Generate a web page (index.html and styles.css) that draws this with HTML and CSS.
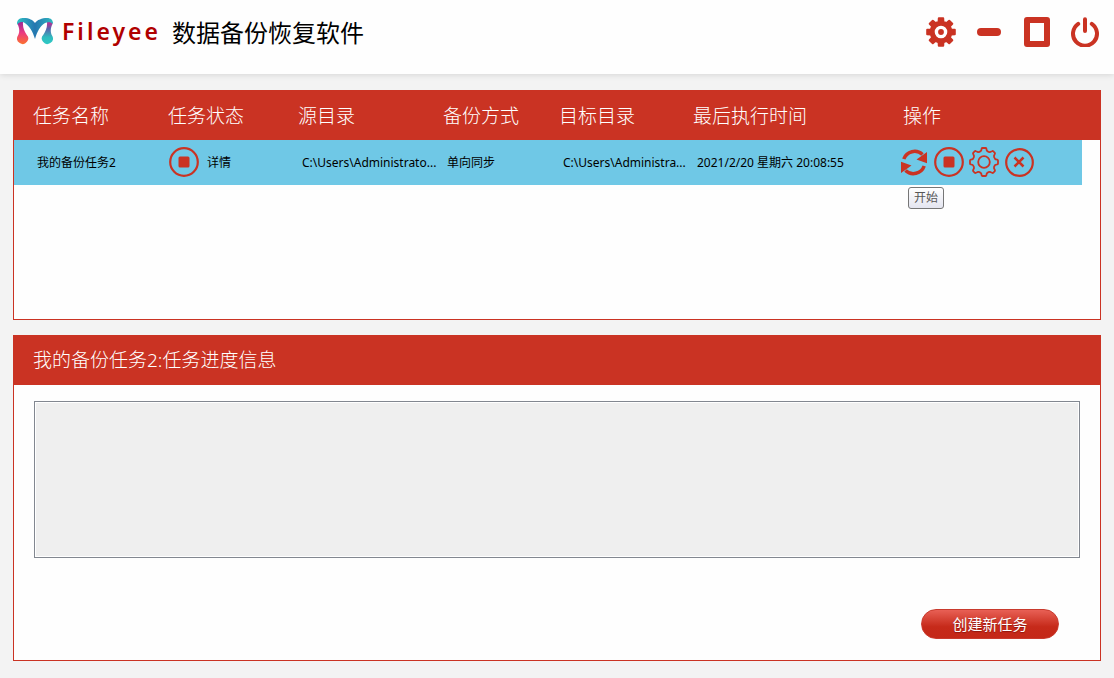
FILE: index.html
```html
<!DOCTYPE html>
<html lang="zh-CN">
<head>
    <meta charset="UTF-8">
    <meta name="viewport" content="width=device-width, initial-scale=1.0">
    <title>Fileyee 数据备份恢复软件</title>
    <link rel="stylesheet" href="styles.css">
</head>
<body>

    <header class="topbar">
        <svg class="logo" viewBox="0 0 36 28" aria-hidden="true">
            <defs>
                <linearGradient id="wing" x1="0" x2="1" y1="0" y2="0">
                    <stop offset="0" stop-color="#2fc0c4"/>
                    <stop offset="0.5" stop-color="#2576b0"/>
                    <stop offset="1" stop-color="#2fb9c0"/>
                </linearGradient>
                <linearGradient id="dropLeft" x1="0" x2="0" y1="0" y2="1">
                    <stop offset="0" stop-color="#9b2a96"/>
                    <stop offset="0.5" stop-color="#ec3a80"/>
                    <stop offset="1" stop-color="#fb7030"/>
                </linearGradient>
                <linearGradient id="dropRight" x1="0" x2="0" y1="0" y2="1">
                    <stop offset="0" stop-color="#c82a90"/>
                    <stop offset="0.3" stop-color="#5a62ac"/>
                    <stop offset="0.7" stop-color="#2ebcbe"/>
                    <stop offset="1" stop-color="#2fc8c4"/>
                </linearGradient>
            </defs>
            <path fill="url(#dropLeft)" d="M0.500 4L6 4C5.500 10 7.500 13 9.500 16.500A5.500 5.500 0 1 1 0.700 18C3 14 2.500 10 0.500 6Z"/>
            <path fill="url(#dropRight)" d="M35.500 4L30 4C30.500 10 28.500 13 26.500 16.500A5.500 5.500 0 1 0 35.300 18C33 14 33.500 10 35.500 6Z"/>
            <path fill="url(#wing)" d="M0 6C0 1 3 0 7 0C12 0 16 2 18 5C20 2 25 0 30 0C34 0 36 2 36 6C34 4 31 4 28 5C23 8 20 14 18 21C16 14 12 7 7 4.500C4 3.500 2 4 0 7Z"/>
        </svg>
        <span class="brand">Fileyee</span>
        <h1>数据备份恢复软件</h1>

        <div class="window-buttons">
            <button class="icon-button" aria-label="设置">
                <svg viewBox="-15 -15 30 30">
                    <path fill="currentColor" stroke="currentColor" stroke-width="2" stroke-linejoin="round" d="M10.200-2.400L13.800-2.200V2.200L10.200 2.400L8.900 5.600L11.300 8.200L8.200 11.300L5.600 8.900L2.400 10.200L2.200 13.800H-2.200L-2.400 10.200L-5.600 8.900L-8.200 11.300L-11.300 8.200L-8.900 5.600L-10.200 2.400L-13.800 2.200V-2.200L-10.200-2.400L-8.900-5.600L-11.300-8.200L-8.200-11.300L-5.600-8.900L-2.400-10.200L-2.200-13.800H2.200L2.400-10.200L5.600-8.900L8.200-11.300L11.300-8.200L8.900-5.600Z"/>
                    <circle r="4.600" fill="currentColor" stroke="#fff" stroke-width="3.400"/>
                </svg>
            </button>
            <button class="icon-button" aria-label="最小化">
                <svg viewBox="0 0 30 30"><rect x="3" y="11" width="24" height="8" rx="4" fill="currentColor"/></svg>
            </button>
            <button class="icon-button" aria-label="最大化">
                <svg viewBox="0 0 30 30"><path fill="currentColor" fill-rule="evenodd" d="M5 0H25Q28 0 28 3V27Q28 30 25 30H5Q2 30 2 27V3Q2 0 5 0ZM8 6V24H22V6Z"/></svg>
            </button>
            <button class="icon-button" aria-label="退出">
                <svg viewBox="0 0 30 30" fill="none" stroke="currentColor" stroke-width="4" stroke-linecap="round"><path d="M8.200 6.800A12 12 0 1 0 21.800 6.800M15 2.200V14"/></svg>
            </button>
        </div>
    </header>

    <main>
        <section class="panel task-list">
            <table>
                <colgroup>
                    <col class="col-name">
                    <col class="col-status">
                    <col class="col-source">
                    <col class="col-mode">
                    <col class="col-target">
                    <col class="col-time">
                    <col>
                    <col class="col-gutter">
                </colgroup>
                <thead>
                    <tr>
                        <th>任务名称</th>
                        <th>任务状态</th>
                        <th>源目录</th>
                        <th>备份方式</th>
                        <th>目标目录</th>
                        <th>最后执行时间</th>
                        <th colspan="2">操作</th>
                    </tr>
                </thead>
                <tbody>
                    <tr>
                        <td>我的备份任务2</td>
                        <td class="status-cell">
                            <div class="icons">
                                <svg class="status-icon" viewBox="0 0 30 30"><circle cx="15" cy="15" r="13.800" fill="none" stroke="currentColor" stroke-width="2.200"/><rect x="9.500" y="9.500" width="11" height="11" rx="1.500" fill="currentColor"/></svg>
                                <a class="detail" href="#progress">详情</a>
                            </div>
                        </td>
                        <td>C:\Users\Administrato...</td>
                        <td>单向同步</td>
                        <td>C:\Users\Administra...</td>
                        <td>2021/2/20 星期六 20:08:55</td>
                        <td class="action-cell">
                            <div class="icons">
                                <button class="icon-button" aria-label="开始" aria-describedby="startTip">
                                    <svg viewBox="0 0 30 30">
                                        <path fill="none" stroke="currentColor" stroke-width="3.500" d="M4.800 12A11.500 11.500 0 0 1 23.500 7.500M25.200 19A11.500 11.500 0 0 1 6.500 23.500"/>
                                        <path fill="currentColor" d="M28 5V16.200L17.500 12.500ZM2 26V14.800L12.500 18.500Z"/>
                                    </svg>
                                </button>
                                <button class="icon-button" aria-label="停止">
                                    <svg viewBox="0 0 30 30"><circle cx="15" cy="15" r="13.800" fill="none" stroke="currentColor" stroke-width="2.200"/><rect x="9.500" y="9.500" width="11" height="11" rx="1.500" fill="currentColor"/></svg>
                                </button>
                                <button class="icon-button" aria-label="任务设置">
                                    <svg viewBox="-15 -15 30 30" fill="none" stroke="currentColor" stroke-width="1.800" stroke-linejoin="round">
                                        <path d="M11-3.200Q11.500-2.600 13.200-2.400Q14-2.200 14-1.500V1.500Q14 2.200 13.200 2.400Q11.500 2.600 11 3.200Q9.700 4.800 10 6.200L10.800 8Q11.200 8.700 10.800 9.200L9.200 10.800Q8.700 11.200 8 10.800L6.200 10Q4.800 9.700 3.200 11Q2.600 11.500 2.400 13.200Q2.200 14 1.500 14H-1.500Q-2.200 14-2.400 13.200Q-2.600 11.500-3.200 11Q-4.800 9.700-6.200 10L-8 10.800Q-8.700 11.200-9.200 10.800L-10.800 9.200Q-11.200 8.700-10.800 8L-10 6.200Q-9.700 4.800-11 3.200Q-11.500 2.600-13.200 2.400Q-14 2.200-14 1.500V-1.500Q-14-2.200-13.200-2.400Q-11.500-2.600-11-3.200Q-9.700-4.800-10-6.200L-10.800-8Q-11.200-8.700-10.800-9.200L-9.200-10.800Q-8.700-11.200-8-10.800L-6.200-10Q-4.800-9.700-3.200-11Q-2.600-11.500-2.400-13.200Q-2.200-14-1.500-14H1.500Q2.200-14 2.400-13.200Q2.600-11.500 3.200-11Q4.800-9.700 6.200-10L8-10.800Q8.700-11.200 9.200-10.800L10.800-9.200Q11.200-8.700 10.800-8L10-6.200Q9.700-4.800 11-3.200Z"/>
                                        <circle r="5.800"/>
                                    </svg>
                                </button>
                                <button class="icon-button" aria-label="删除">
                                    <svg viewBox="0 0 30 30" fill="none" stroke="currentColor"><circle cx="15.500" cy="15.500" r="13.300" stroke-width="2.200"/><path stroke-width="2.500" d="M10.500 10.500L19.500 19.500M19.500 10.500L10.500 19.500"/></svg>
                                </button>
                                <span class="tooltip" id="startTip" role="tooltip">开始</span>
                            </div>
                        </td>
                        <td class="gutter"></td>
                    </tr>
                </tbody>
            </table>
        </section>

        <section class="panel" id="progress">
            <h2><label for="log">我的备份任务2:任务进度信息</label></h2>
            <div class="panel-body">
                <textarea id="log" readonly></textarea>
                <button class="create-button">创建新任务</button>
            </div>
        </section>
    </main>

</body>
</html>
```
FILE: styles.css
```css
* {
    box-sizing: border-box;
}

body {
    margin: 0;
    background: #f3f3f3;
    color: #000;
    font-family: "Noto Sans", "Noto Sans CJK SC", sans-serif;
    font-size: 12px;
}

button {
    font-family: inherit;
    cursor: pointer;
}

/* Title bar */
.topbar {
    display: flex;
    align-items: center;
    height: 74px;
    padding: 0 14px 10px 17px;
    background: #fefefe;
    box-shadow: 0 1px 6px rgba(0, 0, 0, 0.12);
}

.logo {
    width: 36px;
    height: 28px;
}

.brand {
    margin-left: 9px;
    padding-bottom: 3px;
    color: #b00000;
    font-size: 23px;
    font-weight: 600;
    letter-spacing: 3px;
}

h1 {
    margin: 0 0 0 11px;
    padding-bottom: 2px;
    font-size: 24px;
    font-weight: 400;
}

.window-buttons {
    display: flex;
    gap: 18px;
    margin-left: auto;
}

.icon-button {
    width: 30px;
    height: 30px;
    padding: 0;
    border: none;
    background: none;
    color: #ca3323;
}

.icon-button svg,
.status-icon {
    display: block;
    width: 30px;
    height: 30px;
}

/* Panels */
main {
    display: flex;
    flex-direction: column;
    gap: 15px;
    padding: 16px 13px;
}

.panel {
    border: 1px solid #ca3323;
    background: #fefefe;
}

.task-list {
    min-height: 230px;
}

/* Task table */
table {
    width: 100%;
    table-layout: fixed;
    border-collapse: collapse;
}

.col-name { width: 150px; }
.col-status { width: 130px; }
.col-source { width: 145px; }
.col-mode { width: 116px; }
.col-target { width: 134px; }
.col-time { width: 210px; }
.col-gutter { width: 18px; }

th {
    height: 49px;
    padding: 0 0 2px 4px;
    background: #ca3323;
    color: #fff;
    font-size: 19px;
    font-weight: 300;
    text-align: left;
}

th:first-child {
    padding-left: 19px;
}

td {
    height: 45px;
    padding: 0 0 1px 8px;
    background: #6fc8e6;
    white-space: nowrap;
}

td:first-child {
    padding-left: 23px;
}

.status-cell {
    padding-left: 5px;
}

.action-cell {
    padding-left: 0;
}

.gutter {
    padding: 0;
    background: none;
}

.icons {
    position: relative;
    display: flex;
    align-items: center;
    gap: 5px;
}

.status-icon {
    color: #ca3323;
}

.detail {
    margin-left: 3px;
    color: inherit;
    text-decoration: none;
}

.tooltip {
    position: absolute;
    top: 40px;
    left: 9px;
    padding: 0 5px;
    border: 1px solid #767676;
    border-radius: 3px;
    background: linear-gradient(#fff, #e4e5f0);
    color: #575757;
    line-height: 20px;
}

/* Progress panel */
h2 {
    margin: 0;
    padding: 0 19px;
    background: #ca3323;
    color: #fff;
    font-size: 19px;
    font-weight: 300;
    line-height: 49px;
}

.panel-body {
    display: flex;
    flex-direction: column;
    padding: 16px 20px 21px;
}

textarea {
    height: 157px;
    border: 1px solid #828790;
    outline: none;
    background: #efefef;
    box-shadow: inset 0 0 0 1px #fff;
    resize: none;
}

.create-button {
    align-self: flex-end;
    width: 138px;
    height: 30px;
    margin: 51px 21px 0 0;
    padding: 0 0 2px;
    border: 1px solid #c93a2d;
    border-radius: 15px;
    background: linear-gradient(#e86055, #c62a1a 60%, #c42818);
    color: #fff;
    font-size: 15px;
    text-shadow: 0 1px 1px rgba(90, 0, 0, 0.5);
}
```
